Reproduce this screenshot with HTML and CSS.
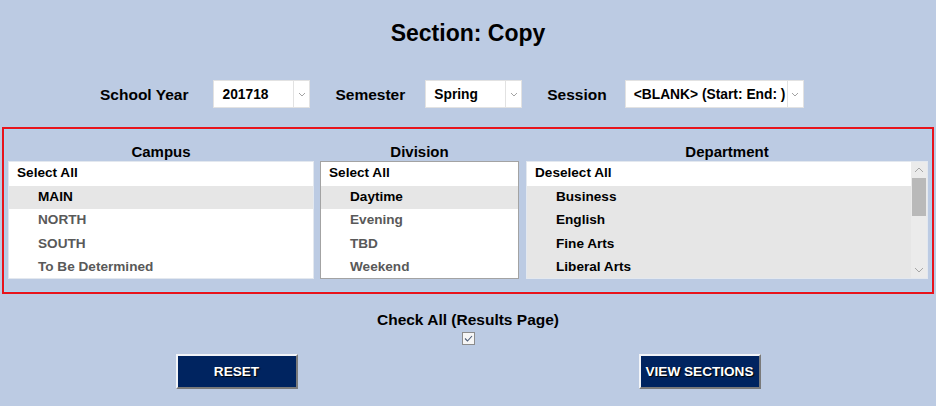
FILE: index.html
```
<!DOCTYPE html>
<html>
<head>
<meta charset="utf-8">
<title>Section: Copy</title>
<link rel="stylesheet" href="styles.css">
</head>
<body>
<div class="page">
  <h1 class="title">Section: Copy</h1>

  <div class="filters">
    <span class="lbl lbl-year">School Year</span>
    <div class="sel sel-year">
      <span class="sel-text">201718</span>
      <span class="sel-arrow"><svg width="8" height="5" viewBox="0 0 8 5"><path d="M1 1 L4 4 L7 1" fill="none" stroke="#a3a3a3" stroke-width="1"/></svg></span>
    </div>
    <span class="lbl lbl-sem">Semester</span>
    <div class="sel sel-sem">
      <span class="sel-text">Spring</span>
      <span class="sel-arrow"><svg width="8" height="5" viewBox="0 0 8 5"><path d="M1 1 L4 4 L7 1" fill="none" stroke="#a3a3a3" stroke-width="1"/></svg></span>
    </div>
    <span class="lbl lbl-ses">Session</span>
    <div class="sel sel-ses">
      <span class="sel-text">&lt;BLANK&gt; (Start: End: )</span>
      <span class="sel-arrow"><svg width="8" height="5" viewBox="0 0 8 5"><path d="M1 1 L4 4 L7 1" fill="none" stroke="#a3a3a3" stroke-width="1"/></svg></span>
    </div>
  </div>

  <div class="panel">
    <div class="col col-campus">
      <div class="col-head">Campus</div>
      <div class="list list-light">
        <div class="row all">Select All</div>
        <div class="row item on">MAIN</div>
        <div class="row item">NORTH</div>
        <div class="row item">SOUTH</div>
        <div class="row item">To Be Determined</div>
      </div>
    </div>
    <div class="col col-division">
      <div class="col-head">Division</div>
      <div class="list list-dark">
        <div class="row all">Select All</div>
        <div class="row item on">Daytime</div>
        <div class="row item">Evening</div>
        <div class="row item">TBD</div>
        <div class="row item">Weekend</div>
      </div>
    </div>
    <div class="col col-dept">
      <div class="col-head">Department</div>
      <div class="list list-light list-scroll">
        <div class="rows">
          <div class="row all">Deselect All</div>
          <div class="row item on">Business</div>
          <div class="row item on">English</div>
          <div class="row item on">Fine Arts</div>
          <div class="row item on">Liberal Arts</div>
        </div>
        <div class="scrollbar">
          <div class="sb-btn"><svg width="10" height="6" viewBox="0 0 10 6"><path d="M1 5 L5 1 L9 5" fill="none" stroke="#a6a6a6" stroke-width="1"/></svg></div>
          <div class="sb-thumb"></div>
          <div class="sb-track"></div>
          <div class="sb-btn"><svg width="10" height="6" viewBox="0 0 10 6"><path d="M1 1 L5 5 L9 1" fill="none" stroke="#a6a6a6" stroke-width="1"/></svg></div>
        </div>
      </div>
    </div>
  </div>

  <div class="check">
    <div class="check-label">Check All (Results Page)</div>
    <div class="check-box"><svg width="13" height="13" viewBox="0 0 13 13"><rect x="0.5" y="0.5" width="12" height="12" fill="#f6f6f6" stroke="#8c8c8c"/><path d="M3 6.5 L5.5 9 L10 4" fill="none" stroke="#4d5d78" stroke-width="1.1"/></svg></div>
  </div>

  <div class="actions">
    <div class="act"><button class="btn">RESET</button></div>
    <div class="act"><button class="btn">VIEW SECTIONS</button></div>
  </div>
</div>
</body>
</html>
```

FILE: styles.css
```
* { box-sizing: border-box; }

body {
  margin: 0;
  background: #bccbe3;
  font-family: "Liberation Sans", Arial, sans-serif;
  color: #000;
}

.page {
  width: 936px;
  height: 406px;
  overflow: hidden;
}

.title {
  margin: 19px 0 0;
  font-size: 23px;
  line-height: 28px;
  font-weight: bold;
  text-align: center;
}

/* filter row */
.filters {
  display: flex;
  align-items: center;
  height: 28px;
  margin-top: 33px;
  padding-left: 100px;
}

.lbl {
  font-size: 15.5px;
  font-weight: bold;
  line-height: 20px;
  padding-top: 1px;
}

.lbl-year { margin-right: 25px; }
.lbl-sem { margin-left: 25px; margin-right: 20px; }
.lbl-ses { margin-left: 25px; margin-right: 18px; }

.sel {
  display: flex;
  height: 28px;
  background: #fff;
  border: 1px solid #e2e2e2;
}

.sel-year, .sel-sem { width: 97px; }
.sel-ses { width: 179px; }

.sel-text {
  flex: 1;
  padding: 2px 0 0 8px;
  font-size: 13.8px;
  font-weight: bold;
  line-height: 24px;
  white-space: nowrap;
}

.sel-arrow {
  width: 16px;
  border-left: 1px solid #e2e2e2;
  display: flex;
  align-items: center;
  justify-content: center;
  padding-top: 1px;
}

/* panel */
.panel {
  display: flex;
  margin: 19px 2px 0;
  border: 2px solid #e8141c;
  box-shadow: inset 0 0 0 1px #a9d6f3;
  padding: 13px 4px 13px;
}

.col-campus { width: 306px; }
.col-division { width: 199px; margin: 0 7px 0 6px; }
.col-dept { width: 402px; }

.col-head {
  height: 19px;
  font-size: 15px;
  font-weight: bold;
  line-height: 19px;
  text-align: center;
}

.list {
  height: 118px;
  overflow: hidden;
  background: #fff;
  border: 1px solid #e3e8ef;
}

.list-dark { border-color: #a3a3a3; }

.list-scroll { display: flex; }
.rows { flex: 1; }

.row {
  height: 23.5px;
  line-height: 21.5px;
  font-size: 13.6px;
  font-weight: bold;
  padding-left: 8px;
  white-space: nowrap;
}

.row.item {
  padding-left: 29px;
  color: #595959;
}

.row.on {
  background: #e6e6e6;
  color: #000;
}

.scrollbar {
  width: 16px;
  display: flex;
  flex-direction: column;
  background: #ebebeb;
}

.sb-btn {
  height: 16px;
  display: flex;
  align-items: center;
  justify-content: center;
}

.sb-thumb {
  height: 38px;
  margin: 0 1px;
  background: #b9b9b9;
}

.sb-track { flex: 1; }

/* check all */
.check {
  margin-top: 17px;
  text-align: center;
}

.check-label {
  font-size: 15.5px;
  font-weight: bold;
  line-height: 18px;
}

.check-box {
  height: 13px;
  margin-top: 3px;
  display: flex;
  justify-content: center;
}

.check-box svg { display: block; margin-left: 1px; }

/* buttons */
.actions {
  display: grid;
  grid-template-columns: 463px 463px;
  padding-left: 5px;
  margin-top: 9px;
}

.act {
  display: flex;
  justify-content: center;
}

.btn {
  width: 122px;
  height: 35px;
  background: #002460;
  border: 2px solid;
  border-color: #f2f4f8 #7a7a7a #7a7a7a #f2f4f8;
  color: #fff;
  font-family: "Liberation Sans", Arial, sans-serif;
  font-size: 13.6px;
  font-weight: bold;
  text-shadow: 1px 1px 1px #000;
  padding: 0;
  white-space: nowrap;
}
```
